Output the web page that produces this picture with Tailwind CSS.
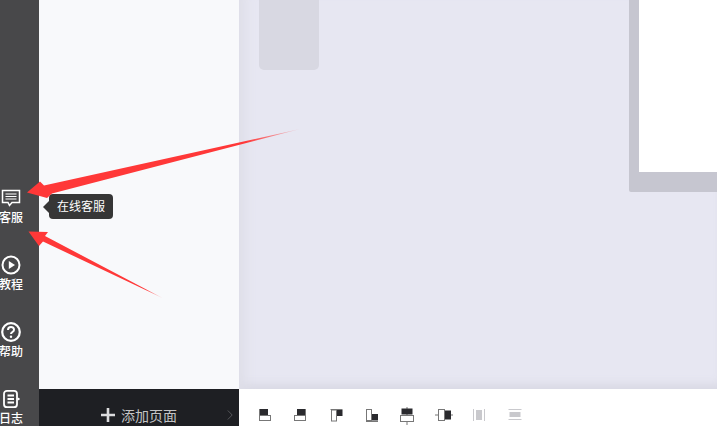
<!DOCTYPE html>
<html lang="zh">
<head>
<meta charset="utf-8">
<script src="https://cdn.jsdelivr.net/npm/@tailwindcss/browser@4"></script>
</head>
<body class="m-0 overflow-hidden">
<div class="relative flex h-[426px] w-[717px] overflow-hidden font-['Liberation_Sans','Noto_Sans_CJK_SC',sans-serif]">

  <!-- icon rail -->
  <nav class="w-[39px] shrink-0 bg-[#48484a] pt-[188px] text-white">
    <div class="flex h-[67px] w-[22px] flex-col items-center">
      <svg class="h-5 w-5 shrink-0" viewBox="0 0 20 20" fill="none" stroke="#fff" stroke-width="1.500"><path d="M1.500 2.500h17v12h-7.500l-2.500 3-1.500-3h-5.500z"/><path d="M4.500 6h11M4.500 8.500h11M4.500 11h11" stroke-width="1.200"/></svg>
      <span class="mt-[2px] whitespace-nowrap text-xs font-medium leading-[16px]">客服</span>
    </div>
    <div class="flex h-[67px] w-[22px] flex-col items-center">
      <svg class="h-5 w-5 shrink-0" viewBox="0 0 20 20" fill="none" stroke="#fff" stroke-width="2"><circle cx="10" cy="10" r="8.500"/><path d="M7.800 6l6.200 4-6.200 4z" fill="#fff" stroke="none"/></svg>
      <span class="mt-[2px] whitespace-nowrap text-xs font-medium leading-[16px]">教程</span>
    </div>
    <div class="flex h-[67px] w-[22px] flex-col items-center">
      <svg class="h-5 w-5 shrink-0" viewBox="0 0 20 20" fill="none" stroke="#fff" stroke-width="2.200"><circle cx="10" cy="10" r="8.800"/><path d="M7 8c0-4 6-4 6-.3 0 2.300-3 2.300-3 4.300" stroke-width="2"/><circle cx="10" cy="14.800" r="1.200" fill="#fff" stroke="none"/></svg>
      <span class="mt-[2px] whitespace-nowrap text-xs font-medium leading-[16px]">帮助</span>
    </div>
    <div class="flex h-[67px] w-[22px] flex-col items-center">
      <svg class="h-5 w-5 shrink-0" viewBox="0 0 20 20" fill="none" stroke="#fff" stroke-width="1.800"><rect x="3" y="1.800" width="13" height="16.400" rx="3"/><path d="M6.500 6.500h6.500M6.500 10h6.500M6.500 13.500h6.500"/><circle cx="17.500" cy="10" r="1.200" fill="#fff" stroke="none"/></svg>
      <span class="mt-[2px] whitespace-nowrap text-xs font-medium leading-[16px]">日志</span>
    </div>
  </nav>

  <!-- pages panel -->
  <aside class="flex w-[200px] shrink-0 flex-col">
    <div class="flex-1 bg-[#f8f9fb]"></div>
    <div class="relative flex h-[37px] items-start justify-center bg-[#1e1f23] pt-[18px] text-[#c4c4c6]">
      <svg class="mr-[6px] mt-[1px] h-[14px] w-[14px]" viewBox="0 0 14 14" fill="#dcdcde"><path d="M5.700 0h2.600v5.700H14v2.600H8.300V14H5.700V8.300H0V5.700h5.700z"/></svg>
      <span class="text-sm leading-[18px]">添加页面</span>
      <svg class="absolute left-[188px] top-[21px] h-[10px] w-[6px]" viewBox="0 0 6 10" fill="none" stroke="#55565a" stroke-width="1"><path d="M.8.500l4.400 4.500-4.400 4.500"/></svg>
    </div>
  </aside>

  <!-- workspace -->
  <main class="flex min-w-0 flex-1 flex-col">
    <div class="flex flex-1 items-start justify-between bg-[#e7e7f2] shadow-[inset_16px_0_12px_-10px_#dedee8,inset_0_-10px_10px_-5px_#d9d9e4]">
      <div class="ml-5 h-[70px] w-[60px] rounded-b-[5px] bg-[#d8d8e2]"></div>
      <div class="w-[88px] rounded-bl-[2px] bg-[#c6c6d0] pb-5 pl-[10px]">
        <div class="h-[172px] bg-white"></div>
      </div>
    </div>
    <div class="flex h-[37px] gap-[15.500px] bg-white pl-[17px] pt-[16px]">
      <svg class="h-5 w-5 shrink-0" viewBox="0 0 20 20"><rect x="3" y="4" width="9" height="6" fill="#2a2a2e"/><rect x="3.500" y="10.500" width="11" height="5" fill="#fff" stroke="#777"/><path d="M3.500 4v12" stroke="#777"/></svg>
      <svg class="h-5 w-5 shrink-0 -ml-[2px] mr-[2px]" viewBox="0 0 20 20"><rect x="7" y="4" width="9" height="6" fill="#2a2a2e"/><rect x="4.500" y="10.500" width="11" height="5" fill="#fff" stroke="#777"/><path d="M15.500 4v12" stroke="#777"/></svg>
      <svg class="h-5 w-5 shrink-0" viewBox="0 0 20 20"><path d="M3.500 4.500h12" stroke="#777"/><rect x="4.500" y="5" width="5" height="11" fill="#fff" stroke="#777"/><rect x="10" y="5" width="5.500" height="6" fill="#2a2a2e"/></svg>
      <svg class="h-5 w-5 shrink-0 -ml-[1px] mr-[1px]" viewBox="0 0 20 20"><path d="M4 16.500h12" stroke="#777"/><rect x="4.500" y="4.500" width="5" height="11" fill="#fff" stroke="#777"/><rect x="10" y="9" width="6" height="6.500" fill="#2a2a2e"/></svg>
      <svg class="h-5 w-5 shrink-0 -ml-[1px] mr-[1px]" viewBox="0 0 20 20"><path d="M10 2v18" stroke="#777"/><rect x="4.500" y="3.500" width="11" height="6" fill="#2a2a2e"/><rect x="3.500" y="10.500" width="13" height="6" fill="#fff" stroke="#777"/></svg>
      <svg class="h-5 w-5 shrink-0" viewBox="0 0 20 20"><path d="M1 10h18" stroke="#777"/><rect x="4.500" y="4.500" width="6" height="11" fill="#fff" stroke="#777"/><rect x="11" y="5.500" width="6" height="9" fill="#2a2a2e"/></svg>
      <svg class="h-5 w-5 shrink-0" viewBox="0 0 20 20"><path d="M4.500 4v12M15.500 4v12" stroke="#c9c9cd"/><rect x="7" y="5" width="6" height="10" fill="#c9c9cd"/></svg>
      <svg class="h-5 w-5 shrink-0" viewBox="0 0 20 20"><path d="M3.500 4.500h13M3.500 14.500h13" stroke="#c9c9cd"/><rect x="4.500" y="7" width="11" height="5" fill="#c9c9cd"/></svg>
    </div>
  </main>

  <!-- tooltip -->
  <div class="absolute left-[49px] top-[194px] flex h-[25px] w-[64px] items-center justify-center rounded-[4px] bg-[#363636] text-[12px] text-white">
    <span class="absolute left-[-6px] top-[7px] h-0 w-0 border-y-[6px] border-r-[6px] border-y-transparent border-r-[#363636]"></span>
    在线客服
  </div>

  <!-- annotation arrows -->
  <svg class="pointer-events-none absolute left-0 top-0 h-[426px] w-[717px]" viewBox="0 0 717 426">
    <defs>
      <linearGradient id="a1" gradientUnits="userSpaceOnUse" x1="28" y1="192" x2="300" y2="129">
        <stop offset="0.800" stop-color="#ff3838"/><stop offset="1" stop-color="#ff3838" stop-opacity="0.150"/>
      </linearGradient>
      <linearGradient id="a2" gradientUnits="userSpaceOnUse" x1="29" y1="232" x2="162" y2="297">
        <stop offset="0.880" stop-color="#ff3838"/><stop offset="1" stop-color="#ff3838" stop-opacity="0.400"/>
      </linearGradient>
    </defs>
    <path d="M27 192.500L40 181.500L44 185.500L300 129L52 193.500L47 198Z" fill="url(#a1)"/>
    <path d="M28.500 231.500L48 232L45 236L162.500 298L43 241.500L39 246Z" fill="url(#a2)"/>
  </svg>
</div>
</body>
</html>
